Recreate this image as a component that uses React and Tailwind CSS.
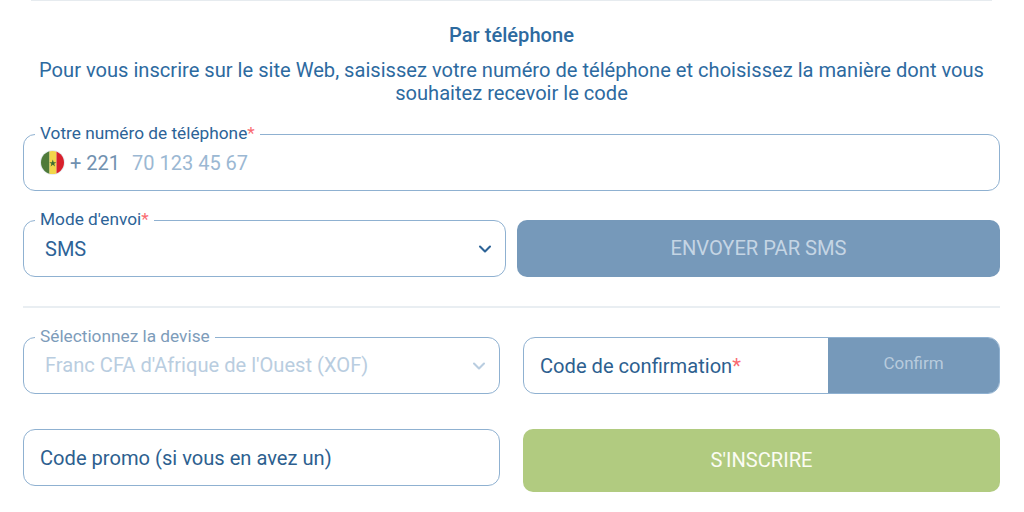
import { ChevronDown } from "lucide-react";

function Flag() {
  return (
    <svg width="25" height="25" viewBox="0 0 25 25" className="shrink-0">
      <defs>
        <clipPath id="round">
          <circle cx="12.5" cy="12.5" r="11.5" />
        </clipPath>
      </defs>
      <circle cx="12.5" cy="12.5" r="12.5" fill="#e6edf3" />
      <g clipPath="url(#round)">
        <rect x="0" y="0" width="9.5" height="25" fill="#4e7a3a" />
        <rect x="9.5" y="0" width="7" height="25" fill="#f2d64b" />
        <rect x="16.5" y="0" width="9" height="25" fill="#d8202c" />
      </g>
      <polygon
        points="12.8,9.6 13.7,12.2 16.3,12.2 14.2,13.8 15,16.4 12.8,14.8 10.6,16.4 11.4,13.8 9.3,12.2 11.9,12.2"
        fill="#3f6b32"
      />
    </svg>
  );
}

function Legend({ text, required, muted }) {
  return (
    <span
      className={`absolute left-[11px] top-[-12px] bg-white px-[5px] text-[17.25px] leading-[20px] ${
        muted ? "text-[#7d9cba]" : "text-[#2d6397]"
      }`}
    >
      {text}
      {required && <span className="text-[#f96b72]">*</span>}
    </span>
  );
}

export default function App() {
  return (
    <div className="h-[512px] w-[1024px] overflow-hidden bg-white font-['Roboto',sans-serif]">
      <div className="ml-[31px] mr-[32px] h-px bg-[#e6ebef]" />

      <div className="flex flex-col items-center pl-[23px] pr-[24px]">
        <h2 className="mt-[23px] text-[20.13px] font-medium leading-[22px] text-[#2d6a9f]">Par téléphone</h2>
        <p className="mt-[13px] w-[960px] text-center text-[20.13px] leading-[23px] text-[#2d6a9f]">
          Pour vous inscrire sur le site Web, saisissez votre numéro de téléphone et choisissez la manière dont vous
          souhaitez recevoir le code
        </p>
      </div>

      <div className="ml-[23px] mr-[24px] mt-[29px] flex flex-col">
        <div className="relative flex h-[57px] items-center rounded-[12px] border border-[#8fb1d1] pl-[16px]">
          <Legend text="Votre numéro de téléphone" required />
          <Flag />
          <span className="ml-[5px] text-[20px] text-[#7191b0]">+ 221</span>
          <span className="ml-[12px] text-[20px] text-[#9bb8d3]">70 123 45 67</span>
        </div>

        <div className="mt-[29px] flex gap-[11px]">
          <div className="relative flex h-[57px] w-[483px] items-center justify-between rounded-[12px] border border-[#8fb1d1] pl-[21px] pr-[10px]">
            <Legend text="Mode d'envoi" required />
            <span className="text-[20px] text-[#2d6397]">SMS</span>
            <ChevronDown size={20} strokeWidth={2.5} className="text-[#2d6397]" />
          </div>
          <div className="flex h-[57px] flex-1 items-center justify-center rounded-[10px] bg-[#7699ba] text-[20.13px] text-[#c5d5e4]">
            ENVOYER PAR SMS
          </div>
        </div>

        <div className="mt-[29px] h-[2px] bg-[#e9eef2]" />

        <div className="mt-[29px] flex gap-[23px]">
          <div className="relative flex h-[57px] w-[477px] items-center justify-between rounded-[12px] border border-[#8fb1d1] pl-[21px] pr-[10px]">
            <Legend text="Sélectionnez la devise" muted />
            <span className="text-[20.13px] text-[#b9cde0]">Franc CFA d'Afrique de l'Ouest (XOF)</span>
            <ChevronDown size={20} strokeWidth={2.5} className="text-[#b9cde0]" />
          </div>
          <div className="flex h-[57px] flex-1 overflow-hidden rounded-[12px] border border-[#8fb1d1]">
            <div className="flex flex-1 items-center pl-[16px] pt-[2px] text-[20.13px] text-[#2d5f8f]">
              Code de confirmation<span className="text-[#f96b72]">*</span>
            </div>
            <div className="flex w-[171px] items-center justify-center bg-[#7699ba] pb-[3px] text-[17px] text-[#b8cbdd]">
              Confirm
            </div>
          </div>
        </div>

        <div className="mt-[35px] flex items-start gap-[23px]">
          <div className="flex h-[57px] w-[477px] items-center rounded-[12px] border border-[#8fb1d1] pl-[16px] pt-[2px] text-[20.13px] text-[#2d5f8f]">
            Code promo (si vous en avez un)
          </div>
          <div className="flex h-[63px] flex-1 items-center justify-center rounded-[10px] bg-[#b1cb80] text-[20.13px] text-[#fbfcf3]">
            S'INSCRIRE
          </div>
        </div>
      </div>
    </div>
  );
}
